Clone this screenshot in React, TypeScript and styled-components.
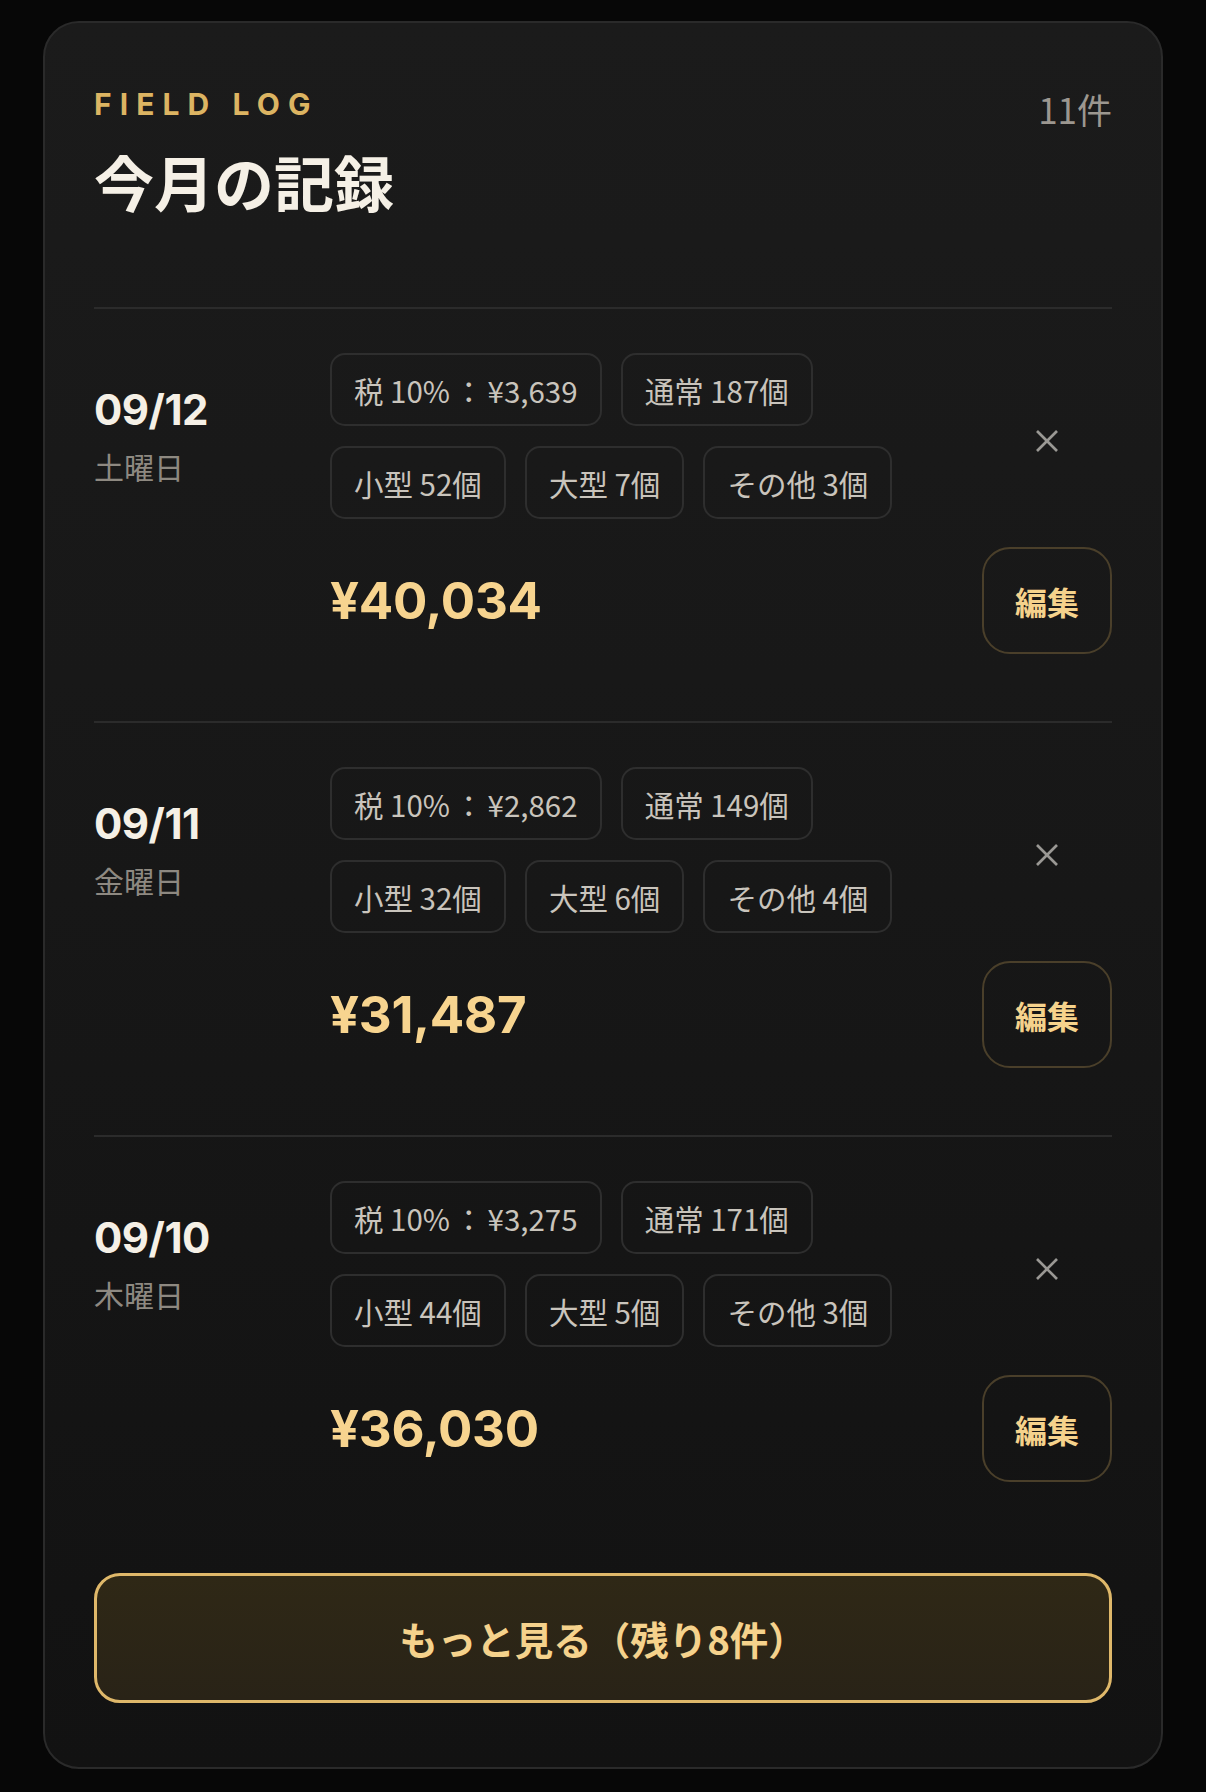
import React from "react";
import styled, { createGlobalStyle } from "styled-components";

const Global = createGlobalStyle`
  html, body { margin: 0; padding: 0; background: #070707; }
  body { font-family: Inter, "Noto Sans CJK JP", sans-serif; -webkit-font-smoothing: antialiased; }
  * { box-sizing: border-box; }
`;

const Page = styled.div`
  padding: 21px 43px 24px;
`;

const Card = styled.section`
  border: 2px solid #2a2a2a;
  border-radius: 36px;
  background: linear-gradient(180deg, #1b1b1b 0%, #171717 50%, #121212 100%);
  padding: 66px 49px 64px;
  display: flex;
  flex-direction: column;
`;

const Header = styled.header`
  display: flex;
  justify-content: space-between;
  align-items: flex-start;
  padding-bottom: 90px;
`;

const HeadText = styled.div`
  display: flex;
  flex-direction: column;
`;

const Eyebrow = styled.div`
  font-family: Inter, sans-serif;
  font-weight: 700;
  font-size: 30px;
  line-height: 1;
  letter-spacing: 0.27em;
  color: #dcb462;
  margin-bottom: 26px;
`;

const Title = styled.h1`
  margin: 0;
  font-family: "Noto Sans CJK JP", sans-serif;
  font-weight: 700;
  font-size: 60px;
  line-height: 1.2;
  color: #f5f0e6;
`;

const Count = styled.div`
  font-family: "Noto Sans CJK JP", sans-serif;
  font-size: 35px;
  line-height: 1;
  color: #9c9790;
  margin-top: 2px;
`;

const Entry = styled.article`
  border-top: 2px solid #2b2b2b;
  padding: 44px 0 67px;
  display: grid;
  grid-template-columns: 236px 1fr 130px;
  row-gap: 28px;
  align-items: center;
`;

const DateBlock = styled.div`
  display: flex;
  flex-direction: column;
  gap: 17px;
`;

const DateText = styled.div`
  font-family: Inter, sans-serif;
  font-weight: 700;
  font-size: 42px;
  line-height: 1;
  letter-spacing: -0.5px;
  color: #f5f0e6;
`;

const Weekday = styled.div`
  font-family: "Noto Sans CJK JP", sans-serif;
  font-size: 30px;
  line-height: 1.2;
  color: #8e8981;
`;

const Chips = styled.div`
  display: flex;
  flex-direction: column;
  gap: 20px;
`;

const ChipRow = styled.div`
  display: flex;
  gap: 19px;
`;

const Chip = styled.span`
  display: inline-flex;
  align-items: center;
  height: 73px;
  padding: 0 22px;
  border: 2px solid #2e2e2e;
  border-radius: 15px;
  font-family: "Noto Sans CJK JP", sans-serif;
  font-size: 29.5px;
  color: #c9c4bc;
  white-space: pre;
`;

const Colon = styled.span`
  margin: 0 4px;
`;

const CloseBtn = styled.button`
  justify-self: center;
  width: 40px;
  height: 40px;
  margin-top: 9px;
  display: flex;
  align-items: center;
  justify-content: center;
  background: none;
  border: none;
  padding: 0;
  color: #9a9894;
`;

const Amount = styled.div`
  grid-column: 2;
  font-family: Inter, sans-serif;
  font-weight: 700;
  font-size: 51px;
  line-height: 1;
  letter-spacing: -0.3px;
  color: #f7d48f;
`;

const EditBtn = styled.button`
  width: 130px;
  height: 107px;
  border: 2px solid #4a3f2a;
  border-radius: 28px;
  background: transparent;
  font-family: "Noto Sans CJK JP", sans-serif;
  font-weight: 700;
  font-size: 32px;
  color: #f5d28c;
  display: flex;
  align-items: center;
  justify-content: center;
  padding: 0;
`;

const MoreBtn = styled.button`
  margin-top: 24px;
  height: 130px;
  width: 100%;
  border: 3px solid #dfb86a;
  border-radius: 26px;
  background: linear-gradient(180deg, #2f2816 0%, #292317 100%);
  font-family: "Noto Sans CJK JP", sans-serif;
  font-weight: 700;
  font-size: 38.5px;
  color: #f5d28c;
`;

type Rec = {
  date: string;
  day: string;
  tax: string;
  normal: number;
  small: number;
  large: number;
  other: number;
  total: string;
};

const records: Rec[] = [
  { date: "09/12", day: "土曜日", tax: "¥3,639", normal: 187, small: 52, large: 7, other: 3, total: "¥40,034" },
  { date: "09/11", day: "金曜日", tax: "¥2,862", normal: 149, small: 32, large: 6, other: 4, total: "¥31,487" },
  { date: "09/10", day: "木曜日", tax: "¥3,275", normal: 171, small: 44, large: 5, other: 3, total: "¥36,030" },
];

const XIcon = () => (
  <svg width="24" height="24" viewBox="0 0 24 24" fill="none" stroke="currentColor" strokeWidth="2.6" strokeLinecap="butt">
    <line x1="2" y1="2" x2="22" y2="22" />
    <line x1="22" y1="2" x2="2" y2="22" />
  </svg>
);

export default function App() {
  return (
    <Page>
      <Global />
      <Card>
        <Header>
          <HeadText>
            <Eyebrow>FIELD LOG</Eyebrow>
            <Title>今月の記録</Title>
          </HeadText>
          <Count>11件</Count>
        </Header>
        {records.map((r) => (
          <Entry key={r.date}>
            <DateBlock>
              <DateText>{r.date}</DateText>
              <Weekday>{r.day}</Weekday>
            </DateBlock>
            <Chips>
              <ChipRow>
                <Chip>
                  税 10%<Colon>：</Colon>
                  {r.tax}
                </Chip>
                <Chip>通常 {r.normal}個</Chip>
              </ChipRow>
              <ChipRow>
                <Chip>小型 {r.small}個</Chip>
                <Chip>大型 {r.large}個</Chip>
                <Chip>その他 {r.other}個</Chip>
              </ChipRow>
            </Chips>
            <CloseBtn aria-label="削除">
              <XIcon />
            </CloseBtn>
            <Amount>{r.total}</Amount>
            <EditBtn>編集</EditBtn>
          </Entry>
        ))}
        <MoreBtn>もっと見る（残り8件）</MoreBtn>
      </Card>
    </Page>
  );
}
